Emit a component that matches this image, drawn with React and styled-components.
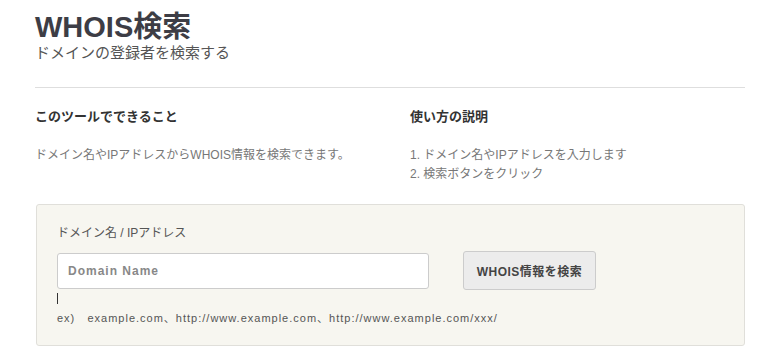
import React from "react";
import styled, { createGlobalStyle } from "styled-components";

const GlobalStyle = createGlobalStyle`
  body {
    margin: 0;
    background: #fff;
    font-family: "Liberation Sans", Arial, "Noto Sans CJK JP", sans-serif;
    color: #333;
  }
`;

const Page = styled.div`
  padding: 10px 20px 0 35px;
  width: 710px;
`;

const Title = styled.h1`
  margin: 0;
  font-family: "Liberation Sans", Arial, "Noto Sans CJK JP", sans-serif;
  font-size: 29px;
  line-height: 34px;
  font-weight: bold;
  color: #3d3d45;
`;

const Subtitle = styled.p`
  margin: 0;
  font-size: 15px;
  line-height: 18px;
  color: #555;
`;

const Divider = styled.hr`
  margin: 25px 0 0;
  border: 0;
  border-top: 1px solid #dedede;
`;

const Columns = styled.div`
  display: grid;
  grid-template-columns: 375px 1fr;
  margin-top: 20px;
`;

const Heading = styled.h3`
  margin: 0;
  font-size: 13px;
  line-height: 18px;
  font-weight: bold;
  color: #333;
`;

const Text = styled.p`
  margin: 20px 0 0;
  font-size: 12px;
  line-height: 19px;
  color: #777;
`;

const Steps = styled.ol`
  margin: 20px 0 0;
  padding: 0;
  list-style: none;
  font-size: 12px;
  line-height: 19px;
  color: #777;
`;

const SearchBox = styled.div`
  margin: 20px 0 0 1px;
  padding: 21px 20px 20px;
  background: #f7f6f0;
  border: 1px solid #e0dfda;
  border-radius: 3px;
`;

const Label = styled.div`
  font-size: 12px;
  line-height: 14px;
  color: #555;
`;

const Row = styled.div`
  display: flex;
  align-items: center;
  gap: 34px;
  margin-top: 11px;
`;

const Input = styled.input`
  box-sizing: border-box;
  width: 372px;
  height: 36px;
  padding: 0 10px;
  background: #fff;
  border: 1px solid #ccc;
  border-radius: 3px;
  font-family: "Liberation Sans", Arial, sans-serif;
  font-size: 12px;
  font-weight: bold;
  letter-spacing: 1px;
  outline: none;
  &::placeholder {
    color: #888;
  }
`;

const Button = styled.button`
  box-sizing: border-box;
  width: 133px;
  height: 39px;
  background: #ececec;
  border: 1px solid #ccc;
  border-radius: 3px;
  font-family: "Liberation Sans", Arial, "Noto Sans CJK JP", sans-serif;
  font-size: 12px;
  font-weight: bold;
  letter-spacing: 0.5px;
  color: #444;
`;

const Caret = styled.div`
  width: 1px;
  height: 11px;
  margin-top: 3px;
  background: #333;
`;

const Example = styled.p`
  margin: 7px 0 0;
  font-size: 11px;
  line-height: 14px;
  letter-spacing: 1px;
  color: #555;
  white-space: pre;
`;

const App = () => (
  <Page>
    <GlobalStyle />
    <Title>WHOIS検索</Title>
    <Subtitle>ドメインの登録者を検索する</Subtitle>
    <Divider />
    <Columns>
      <div>
        <Heading>このツールでできること</Heading>
        <Text>ドメイン名やIPアドレスからWHOIS情報を検索できます。</Text>
      </div>
      <div>
        <Heading>使い方の説明</Heading>
        <Steps>
          <li>1. ドメイン名やIPアドレスを入力します</li>
          <li>2. 検索ボタンをクリック</li>
        </Steps>
      </div>
    </Columns>
    <SearchBox>
      <Label>ドメイン名 / IPアドレス</Label>
      <Row>
        <Input placeholder="Domain Name" />
        <Button>WHOIS情報を検索</Button>
      </Row>
      <Caret />
      <Example>
        {"ex)   example.com、http://www.example.com、http://www.example.com/xxx/"}
      </Example>
    </SearchBox>
  </Page>
);

export default App;
